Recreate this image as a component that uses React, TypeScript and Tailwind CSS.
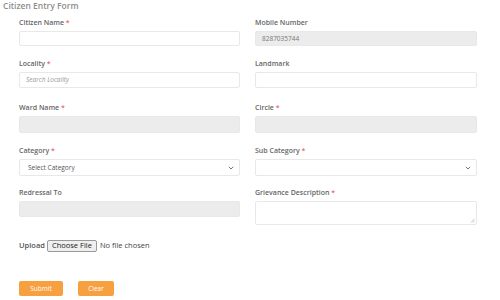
import React from "react";

function Label({ text, required }: { text: string; required?: boolean }) {
  return (
    <div className="h-[10px] leading-[10px] text-[7px] font-semibold text-[#666]">
      {text}
      {required && <span className="text-[#e86a6a]"> *</span>}
    </div>
  );
}

function Chevron() {
  return (
    <svg width="6" height="4" viewBox="0 0 6 4" className="absolute right-[5px] top-[6px]">
      <path d="M0.8 0.8 L3 3 L5.2 0.8" fill="none" stroke="#777" strokeWidth="1" />
    </svg>
  );
}

const box = "h-[15px] w-full rounded-[2px] border border-[#e8e8e8]";

export default function App() {
  return (
    <div className="w-[500px] h-[300px] bg-white overflow-hidden" style={{ fontFamily: '"Open Sans", "Noto Sans", sans-serif' }}>
      <div className="pl-[3px] pt-[1px] h-[10px] leading-[10px] text-[8.5px] font-semibold text-[#8c8c8c]">
        Citizen Entry Form
      </div>

      <div className="pl-[19px] pt-[8px] grid grid-cols-[221px_222px] gap-x-[15px]">
        {/* row 1 */}
        <div>
          <Label text="Citizen Name" required />
          <div className={`mt-[3px] ${box} bg-white`} />
        </div>
        <div>
          <Label text="Mobile Number" />
          <div className={`mt-[3px] ${box} bg-[#ececec] flex items-center pl-[6px] text-[6.5px] text-[#777]`}>
            8287035744
          </div>
        </div>

        {/* row 2 */}
        <div className="mt-[13px]">
          <Label text="Locality" required />
          <div className={`mt-[3px] ${box} h-[16px] bg-white flex items-center pl-[6px] text-[6.5px] italic text-[#999]`}>
            Search Locality
          </div>
        </div>
        <div className="mt-[13px]">
          <Label text="Landmark" />
          <div className={`mt-[3px] ${box} h-[16px] bg-white`} />
        </div>

        {/* row 3 */}
        <div className="mt-[15px]">
          <Label text="Ward Name" required />
          <div className={`mt-[3px] ${box} h-[17px] bg-[#ececec]`} />
        </div>
        <div className="mt-[15px]">
          <Label text="Circle" required />
          <div className={`mt-[3px] ${box} h-[17px] bg-[#ececec]`} />
        </div>

        {/* row 4 */}
        <div className="mt-[13px]">
          <Label text="Category" required />
          <div className={`relative mt-[3px] ${box} h-[17px] bg-white flex items-center pl-[8px] text-[6.5px] text-[#555]`}>
            Select Category
            <Chevron />
          </div>
        </div>
        <div className="mt-[13px]">
          <Label text="Sub Category" required />
          <div className={`relative mt-[3px] ${box} h-[17px] bg-white`}>
            <Chevron />
          </div>
        </div>

        {/* row 5 */}
        <div className="mt-[12px]">
          <Label text="Redressal To" />
          <div className={`mt-[3px] ${box} h-[16px] bg-[#ececec]`} />
        </div>
        <div className="mt-[12px]">
          <Label text="Grievance Description" required />
          <div className="relative mt-[3px] w-full h-[24px] rounded-[2px] border border-[#e8e8e8] bg-white">
            <svg width="5" height="5" viewBox="0 0 5 5" className="absolute right-[1px] bottom-[1px]">
              <path d="M1 4.5 L4.5 1 M3 4.5 L4.5 3" stroke="#aaa" strokeWidth="0.7" />
            </svg>
          </div>
        </div>
      </div>

      <div className="pl-[19px] mt-[15px] flex items-center gap-[2px] text-[7.5px] text-[#333]">
        <span className="font-semibold text-[#555]">Upload</span>
        <span className="h-[12px] px-[4px] flex items-center border border-[#999] rounded-[2px] bg-[#efefef] text-[7.5px] text-[#222]">
          Choose File
        </span>
        <span className="ml-[1px] text-[7.5px] text-[#444]">No file chosen</span>
      </div>

      <div className="pl-[19px] mt-[29px] flex gap-[15px]">
        <button className="w-[44px] h-[15px] rounded-[2px] bg-[#f7a03f] text-white text-[6.5px]">Submit</button>
        <button className="w-[36px] h-[15px] rounded-[2px] bg-[#f7a03f] text-white text-[6.5px]">Clear</button>
      </div>
    </div>
  );
}
